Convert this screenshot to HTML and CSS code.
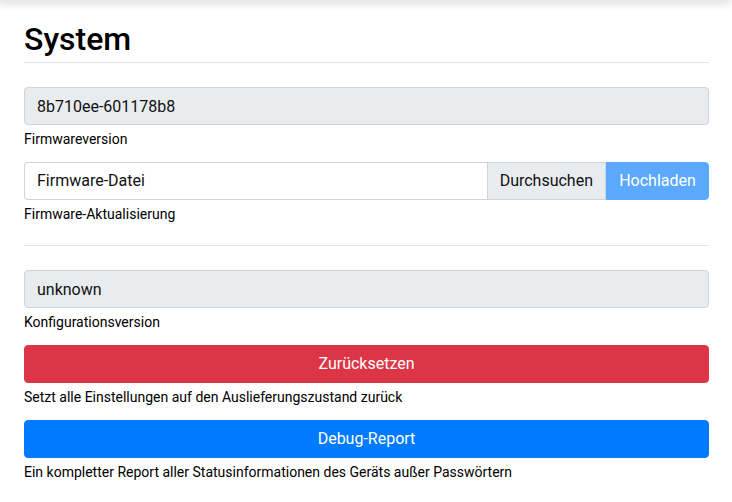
FILE: index.html
```html
<!DOCTYPE html>
<html lang="de">
<head>
<meta charset="utf-8">
<title>System</title>
<link rel="stylesheet" href="styles.css">
</head>
<body>
<div class="topbar"></div>
<main class="page">
  <h1 class="title">System</h1>
  <hr class="rule rule-top">

  <div class="group">
    <input class="field field-readonly" type="text" value="8b710ee-601178b8" readonly>
    <div class="hint">Firmwareversion</div>
  </div>

  <div class="group">
    <div class="input-group">
      <div class="file-name">Firmware-Datei</div>
      <div class="browse">Durchsuchen</div>
      <button class="upload" type="button" disabled>Hochladen</button>
    </div>
    <div class="hint">Firmware-Aktualisierung</div>
  </div>

  <hr class="rule rule-mid">

  <div class="group">
    <input class="field field-readonly" type="text" value="unknown" readonly>
    <div class="hint">Konfigurationsversion</div>
  </div>

  <div class="group">
    <button class="btn btn-danger" type="button">Zurücksetzen</button>
    <div class="hint">Setzt alle Einstellungen auf den Auslieferungszustand zurück</div>
  </div>

  <div class="group">
    <button class="btn btn-primary" type="button">Debug-Report</button>
    <div class="hint">Ein kompletter Report aller Statusinformationen des Geräts außer Passwörtern</div>
  </div>
</main>
</body>
</html>
```

FILE: styles.css
```css
* { box-sizing: border-box; }

html, body {
  margin: 0;
  padding: 0;
  background: #fff;
  font-family: Roboto, "Noto Sans", "Liberation Sans", sans-serif;
  color: #212529;
  overflow: hidden;
}

.topbar {
  height: 0;
  width: 728px;
  box-shadow: 0 0 9px 3px rgba(0, 0, 0, 0.18);
}

.page {
  padding: 0 23px 0 24px;
}

.title {
  margin: 20px 0 0;
  font-size: 32px;
  font-weight: 500;
  line-height: 38px;
  color: #000;
}

.rule {
  border: 0;
  border-top: 1px solid #e1e3e7;
  margin: 0 0 24px;
  height: 0;
}

.rule-top { margin-top: 4px; }
.rule-mid { margin-top: 20px; }

.group {
  margin-bottom: 12px;
}

.field {
  display: block;
  width: 100%;
  height: 38px;
  padding: 6px 12px;
  font-family: inherit;
  font-size: 16px;
  line-height: 24px;
  color: #111;
  border: 1px solid #ced4da;
  border-radius: 4px;
  outline: none;
}

.field-readonly {
  background: #e9ecef;
}

.hint {
  margin-top: 4px;
  font-size: 14px;
  line-height: 21px;
  color: #000;
}

.input-group {
  display: flex;
  height: 38px;
}

.file-name {
  flex: 1;
  padding: 6px 12px;
  font-size: 16px;
  line-height: 24px;
  color: #111;
  border: 1px solid #ced4da;
  border-right: 0;
  border-radius: 4px 0 0 4px;
  background: #fff;
}

.browse {
  padding: 6px 12px;
  font-size: 16px;
  line-height: 24px;
  color: #111;
  background: #e9ecef;
  border: 1px solid #ced4da;
}

.upload {
  width: 103px;
  padding: 6px 12px;
  font-family: inherit;
  font-size: 16px;
  line-height: 24px;
  color: #fff;
  background: #5aa9ff;
  border: 1px solid #5aa9ff;
  border-radius: 0 4px 4px 0;
}

.btn {
  display: block;
  width: 100%;
  height: 38px;
  padding: 6px 12px;
  font-family: inherit;
  font-size: 16px;
  line-height: 24px;
  color: #fff;
  border: 1px solid transparent;
  border-radius: 4px;
  text-align: center;
}

.btn-danger {
  background: #dc3545;
  border-color: #dc3545;
}

.btn-primary {
  background: #007bff;
  border-color: #007bff;
}
```
